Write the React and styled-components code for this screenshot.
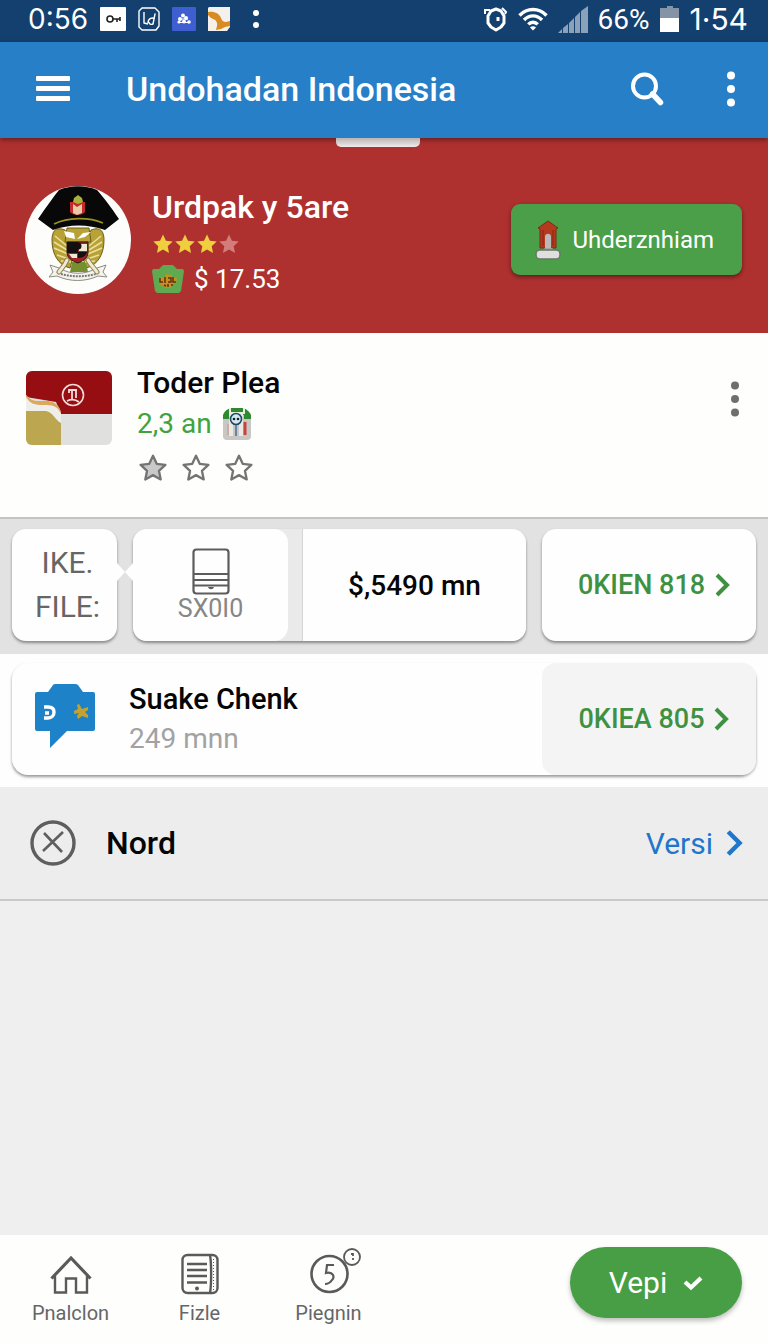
import React from 'react';
import styled, { createGlobalStyle } from 'styled-components';

const GlobalStyle = createGlobalStyle`
  * {
    box-sizing: border-box;
  }
  body {
    margin: 0;
    background: #efefef;
    font-family: Roboto, "Liberation Sans", sans-serif;
    color: #050505;
  }
  button {
    font: inherit;
    color: inherit;
    border: none;
    background: none;
    padding: 0;
    cursor: pointer;
  }
  a {
    color: inherit;
    text-decoration: none;
  }
  h1, h2, h3, p {
    margin: 0;
    font-weight: 400;
  }
  svg {
    display: block;
    flex: none;
  }
`

const STAR = 'M12 1.5l3.2 6.9 7.4.9-5.5 5.1 1.5 7.4L12 18.1l-6.6 3.7 1.5-7.4L1.4 9.3l7.4-.9z';

function Star({ size, fill, stroke }) {
  return (
    <svg width={size} height={size} viewBox="0 0 24 24" fill={fill} stroke={stroke} strokeWidth="2" strokeLinejoin="round">
      <path d={STAR} />
    </svg>
  )
}

function Dots({ color, size }) {
  return (
    <svg width={size} height="40" viewBox="0 0 10 40" fill={color}>
      <circle cx="5" cy="6.5" r="4" />
      <circle cx="5" cy="20" r="4" />
      <circle cx="5" cy="33.5" r="4" />
    </svg>
  )
}

function Chevron({ width, height }) {
  return (
    <svg width={width} height={height} viewBox="0 0 16 24" fill="none" stroke="currentColor" strokeWidth="4">
      <path d="M2 2l10 10L2 22" />
    </svg>
  )
}

function KeyIcon() {
  return (
    <svg width="26" height="24" viewBox="0 0 26 24">
      <rect width="26" height="24" rx="1" fill="#fff" />
      <circle cx="10" cy="12" r="3" fill="none" stroke="#222" strokeWidth="1.6" />
      <path d="M13 12h7M17 12v3M20 10v4" fill="none" stroke="#222" strokeWidth="1.6" />
    </svg>
  )
}

function NoteIcon() {
  return (
    <svg width="22" height="24" viewBox="0 0 22 24" fill="none" stroke="#fff" strokeWidth="1.4" strokeLinejoin="round">
      <path d="M4 1h13l4 4v14l-3 4H4l-3-3V4z" />
      <path d="M6 5v11l4 1M10 16c0-5 5-6 6-4l1-5-2 10c-2 1-4 0-4-2" />
    </svg>
  )
}

function PuzzleIcon() {
  return (
    <svg width="24" height="24" viewBox="0 0 24 24">
      <rect width="24" height="24" rx="1" fill="#3f5fd0" />
      <g fill="#fff">
        <circle cx="11" cy="8.5" r="2" />
        <circle cx="8" cy="12" r="2" />
        <circle cx="14" cy="11" r="2" />
        <circle cx="7" cy="15" r="1.6" />
        <circle cx="12" cy="14.5" r="2" />
        <circle cx="17" cy="15" r="1.8" />
      </g>
      <path d="M7 12h9M6 15.5h12" stroke="#fff" strokeWidth="1" />
    </svg>
  )
}

function BirdIcon() {
  return (
    <svg width="23" height="24" viewBox="0 0 23 24">
      <path d="M1 0h21v20l-3 4H0V1z" fill="#f4f1ec" />
      <path d="M0 5c6-1 11 1 13 6 1 3 3 4 5 4l4-1v5l-5 1-4 2-5 1c1-4 2-6 0-9-1-2-5-2-7-5l-1-1z" fill="#d98a20" />
    </svg>
  )
}

function AlarmIcon() {
  return (
    <svg width="24" height="26" viewBox="0 0 24 26" fill="none" stroke="#fff">
      <path d="M7 5l5-2 5 2 3 5v7l-3 4-5 3-5-3-3-4v-7z" strokeWidth="3" strokeLinejoin="round" />
      <path d="M1 8V4h5M18 2l4 4-1 2" strokeWidth="2" />
      <path d="M14 11v4" strokeWidth="3" />
    </svg>
  )
}

function WifiIcon() {
  return (
    <svg width="30" height="24" viewBox="0 0 30 24" fill="none" stroke="#fff" strokeWidth="3.4">
      <path d="M1.500 8.500c7.500-8 19.500-8 27 0M6 13c5-5.500 13-5.500 18 0M10.300 17.300c2.600-2.800 6.800-2.800 9.400 0" />
      <path d="M12 20.500c1.700-1.600 4.300-1.600 6 0L15 23.500z" fill="#fff" stroke="none" />
    </svg>
  )
}

function SignalIcon() {
  return (
    <svg width="30" height="27" viewBox="0 0 30 27" fill="#8ba1ba">
      <path d="M0 27l4-4v4zM5 27v-5l5-4v9zM11 27V17l5-5v15zM17 27V11l5-5v21zM23 27V5l7-5v27z" />
    </svg>
  )
}

function BatteryIcon() {
  return (
    <svg width="20" height="26" viewBox="0 0 20 26">
      <path d="M7 0h6v2h6v10H0V2h7z" fill="#8493a5" />
      <path d="M0 12h19v14H0z" fill="#fff" />
    </svg>
  )
}

function Emblem() {
  return (
    <svg width="106" height="108" viewBox="0 0 106 108">
      <ellipse cx="53" cy="54" rx="53" ry="54" fill="#fdfdfb" />
      <g fill="#b9a235" stroke="#6d5f1c" strokeWidth="1">
        <path d="M40 44C30 40 27 46 27 54c0 14 6 25 18 28l4-14z" />
        <path d="M66 44c10-4 13 2 13 10 0 14-6 25-18 28l-4-14z" />
        <path d="M42 42h22l2 14H40z" />
        <path d="M47 76h14l2 10H45z" fill="#77902f" stroke="none" />
      </g>
      <path
        d="M30 50l12 10M29 56l13 8M29 62l14 6M32 69l12 4M36 75l10 1M76 50L64 60M77 56l-13 8M77 62l-14 6M74 69l-12 4M70 75l-10 1"
        stroke="#ece0a0"
        strokeWidth="1.5"
      />
      <path d="M39 45l10 2 1 6-9-2zM66 46l-8 1-6 6 8-2z" fill="#fff" />
      <path d="M42 56h21v10c0 6-5 9-10 11-6-2-11-5-11-11z" fill="#a52229" stroke="#2c1a10" strokeWidth="1" />
      <path d="M42 56h11v11H42zM53 66h9c-1 4-4 6-9 6z" fill="#141010" />
      <path d="M54 58h8v7h-8zM44 68h8v4h-5z" fill="#efe9d6" />
      <circle cx="53" cy="60" r="3.5" fill="#141010" />
      <path
        d="M25 79l9 3c12 7 26 7 38 0l9-3-3 7 4 5-9-1c-13 6-28 6-41 0l-8 1 4-5z"
        fill="#f4f3ee"
        stroke="#8d8d85"
        strokeWidth="1"
      />
      <path d="M36 88c11 3 24 3 35 0" fill="none" stroke="#7a7a74" strokeWidth="2" strokeDasharray="2 1" />
      <path d="M42 74c-2 5-5 8-8 12M63 74c2 4 6 8 9 12" stroke="#8a8053" strokeWidth="5" strokeLinecap="round" />
      <path d="M42 74c-2 5-5 8-8 12M63 74c2 4 6 8 9 12" stroke="#f0ead2" strokeWidth="3" strokeLinecap="round" />
      <path d="M13 33C22 20 29 10 34 4c12-5 26-5 38 0 7 8 14 17 22 29l-14 11c-17-6-36-6-52 0z" fill="#070807" />
      <path d="M29 38c14-7 35-7 49-1" fill="none" stroke="#9a9226" strokeWidth="1.6" />
      <path d="M45 16h15v10c-3 4-12 4-15 0z" fill="#c4292b" />
      <path d="M48 18l4 3 5-3v9l-5 2-4-2z" fill="#e8c9a8" />
      <path d="M48 16l1-4 4-3 4 3 1 4-5 2z" fill="#a8b23a" />
    </svg>
  )
}

function BasketIcon() {
  return (
    <svg width="32" height="28" viewBox="0 0 32 28">
      <path d="M1 4h6l4-4h10l4 4h6l1 2-3 20-2 2H5l-2-2L0 6z" fill="#5faa50" />
      <path d="M7 13l6-1 1-3 4 1 2-1v3l5 1-1 5-3 1-2 4h-5l-3-2-4-2z" fill="#c98e1f" />
      <path d="M8 13v4h3M13 12v6M16 13h3v4h-3M21 12v5h3M12 20l2 1M16 19v3M19 20h2" stroke="#5e3210" strokeWidth="1.5" fill="none" />
    </svg>
  )
}

function MonumentIcon() {
  return (
    <svg width="26" height="40" viewBox="0 0 26 40">
      <path d="M13 1l10 7-2 1v19H5V9L3 8z" fill="#b5391f" stroke="#7d2a17" strokeWidth="1" />
      <path d="M8 10v16M18 10v16" stroke="#a02d18" strokeWidth="2" />
      <path d="M10 30V16c1-3 5-3 6 0v14z" fill="#b9bab8" />
      <path d="M7 31l3-3h7l3 3z" fill="#a2a5a3" />
      <rect x="1" y="30" width="24" height="9" rx="4" fill="#dfe0de" stroke="#68756a" strokeWidth="1.5" />
    </svg>
  )
}

function CardArt() {
  return (
    <svg width="86" height="74" viewBox="0 0 86 74">
      <clipPath id="card"><rect width="86" height="74" rx="6" /></clipPath>
      <g clipPath="url(#card)">
        <rect width="86" height="74" fill="#e0e0de" />
        <path d="M0 0h86v43H35L30 31 0 26z" fill="#960e12" />
        <path d="M0 24c5 6 9 6 16 6 10-1 17 3 19 12v12c-6-1-7-6-11-9H0z" fill="#efeeea" />
        <path d="M0 24c5 6 9 6 16 6 10-1 18 3 19 13-4-9-9-9-17-9-9 0-14-1-18-8z" fill="#d9a95c" />
        <path d="M0 40h20c7 1 9 9 15 12v22H0z" fill="#bda650" />
      </g>
      <circle cx="47" cy="24" r="10.5" fill="none" stroke="#f3dcdc" strokeWidth="1.6" />
      <path d="M43 22v-3h8M46 19v10M50 20v7M41 30c4-2 8-2 12 1" fill="none" stroke="#f3dcdc" strokeWidth="1.8" />
    </svg>
  )
}

function ShopIcon() {
  return (
    <svg width="30" height="34" viewBox="0 0 30 34">
      <rect x="1" y="7" width="28" height="26" rx="4" fill="#c9c7c6" />
      <path d="M1 12V8c2-5 6-7 9-7h10c4 0 8 4 9 7v4h-7V8H9v4z" fill="#2f8a2f" />
      <path d="M7 7h4v22H7zM17 7h4v22h-4z" fill="#ece8e4" />
      <path d="M8 1v5h14V1" fill="none" stroke="#e6efe0" strokeWidth="2" />
      <circle cx="14" cy="12" r="5.5" fill="#d7e7ee" stroke="#1d4b66" strokeWidth="1.6" />
      <circle cx="12" cy="12" r="1.3" fill="#10222e" />
      <circle cx="16" cy="12" r="1.3" fill="#10222e" />
      <path d="M14 18v11" stroke="#4b7596" strokeWidth="1.6" />
      <path d="M23 15v13" stroke="#c0453e" strokeWidth="3" />
      <path d="M6 17v11" stroke="#c9a79a" strokeWidth="1.6" />
    </svg>
  )
}

function PhoneIcon() {
  return (
    <svg width="38" height="47" viewBox="0 0 38 47" fill="none" stroke="#5c5c5c" strokeWidth="2.2">
      <rect x="1.5" y="1.5" width="35" height="44" rx="3" />
      <path d="M2 26h34M2 32h34M2 37.5h34" />
      <path d="M16 39h6c-1 3-5 3-6 0z" fill="#5c5c5c" stroke="none" />
    </svg>
  )
}

function ChatIcon() {
  return (
    <svg width="62" height="66" viewBox="0 0 62 66">
      <path d="M3 9h11l5-7q1-1 2-1h20q2 0 3 1l5 7h10q2 0 2 2v35q0 2-2 2H33L16 65V48H3q-2 0-2-2V11q0-2 2-2z" fill="#1e82c8" />
      <path d="M10 24h4c4 0 6 2 6 5s-2 6-6 6h-4M11 30h4" fill="none" stroke="#fff" strokeWidth="3.4" />
      <path d="M45 21l3 5 6-2v3l-3 2 3 3v3l-6-2-4 3-1-3 2-3-5 1v-3l4-2-1-4z" fill="#c3a22f" />
    </svg>
  )
}

function CancelIcon() {
  return (
    <svg width="46" height="46" viewBox="0 0 46 46" fill="none" stroke="#5e5e5e">
      <circle cx="23" cy="23" r="21" strokeWidth="3.4" />
      <path d="M14 13l18 19M33 12L13 31" strokeWidth="2.6" />
    </svg>
  )
}

function HomeIcon() {
  return (
    <svg width="42" height="40" viewBox="0 0 42 40" fill="none" stroke="#5a5a5a" strokeWidth="2.4">
      <path d="M1.5 23.500L21 3l19.500 20.500" strokeWidth="3.2" />
      <path d="M5 21v16.500h11V23.500h10v14h11V21" />
    </svg>
  )
}

function FileIcon() {
  return (
    <svg width="38" height="42" viewBox="0 0 38 42" fill="none" stroke="#5a5a5a" strokeWidth="2.4">
      <rect x="1.5" y="2" width="35" height="38" rx="5" />
      <path d="M29 2c1.5 8 1.5 30 0 38M6 11h20M6 17h20M6 23h20M6 29.500h20" />
      <circle cx="16" cy="35.5" r="2" fill="#5a5a5a" stroke="none" />
      <path d="M32.5 6v31" strokeWidth="1" strokeDasharray="1 2" />
    </svg>
  )
}

// wide box on the left keeps the big coin centred over its label
function CoinIcon() {
  return (
    <svg width="65" height="48" viewBox="-13 0 65 48" fill="none" stroke="#5a5a5a">
      <circle cx="20.5" cy="27" r="18" strokeWidth="2.6" />
      <circle cx="43" cy="10" r="8" strokeWidth="1.8" />
      <path d="M25 18h-7l-1 8c7-2 9 4 6 7-2 3-4 4-7 4" strokeWidth="2.2" />
      <path d="M42 7h2v6" strokeWidth="1.8" strokeDasharray="4 2" />
    </svg>
  )
}

const navItems = [
  { label: 'Pnalclon', icon: <HomeIcon /> },
  { label: 'Fizle', icon: <FileIcon /> },
  { label: 'Piegnin', icon: <CoinIcon /> },
];

function App() {
  return (
    <React.Fragment>
      <GlobalStyle />
      <Page>
        <StatusBar>
          <StatusGroup>
            <Clock>0:56</Clock>
            <KeyIcon />
            <NoteIcon />
            <PuzzleIcon />
            <BirdIcon />
            <MoreDots />
          </StatusGroup>
          <StatusGroup $tight>
            <AlarmIcon />
            <WifiIcon />
            <SignalIcon />
            <span>66%</span>
            <BatteryIcon />
            <Clock $large>1·54</Clock>
          </StatusGroup>
        </StatusBar>

        <AppBar>
          <IconButton aria-label="Menu">
            <svg width="34" height="26" viewBox="0 0 34 26" fill="#fff">
              <rect width="34" height="5" rx="1" />
              <rect y="10" width="34" height="5" rx="1" />
              <rect y="20" width="34" height="5" rx="1" />
            </svg>
          </IconButton>
          <AppTitle>Undohadan Indonesia</AppTitle>
          <IconButton aria-label="Search">
            <svg width="34" height="34" viewBox="0 0 34 34" fill="none" stroke="#fff">
              <circle cx="14.5" cy="14" r="11.5" strokeWidth="4" />
              <path d="M22.5 22l8 8.500" strokeWidth="5.5" strokeLinecap="round" />
            </svg>
          </IconButton>
          <IconButton aria-label="More options"><Dots color="#fff" size="10" /></IconButton>
        </AppBar>

        <Hero>
          <Emblem />
          <HeroText>
            <HeroName>Urdpak y 5are</HeroName>
            <Stars>
              <Star size={22} fill="#efcf3d" />
              <Star size={22} fill="#efcf3d" />
              <Star size={22} fill="#efcf3d" />
              <Star size={22} fill="#d27d7c" />
            </Stars>
            <Price><BasketIcon /> $ 17.53</Price>
          </HeroText>
          <HeroButton><MonumentIcon /> Uhderznhiam</HeroButton>
        </Hero>

        <Item>
          <CardArt />
          <ItemText>
            <ItemTitle>Toder Plea</ItemTitle>
            <Distance>2,3 an <ShopIcon /></Distance>
            <Stars $wide>
              <Star size={28} fill="#c9c9c9" stroke="#747474" />
              <Star size={28} fill="none" stroke="#747474" />
              <Star size={28} fill="none" stroke="#747474" />
            </Stars>
          </ItemText>
          <IconButton aria-label="Item options"><Dots color="#6f6f6f" size="10" /></IconButton>
        </Item>

        <Strip>
          <LabelCard>
            <span>IKE.</span>
            <span>FILE:</span>
          </LabelCard>
          <DeviceCard>
            <DevicePanel>
              <PhoneIcon />
              SX0I0
            </DevicePanel>
            <Amount>$,5490 mn</Amount>
          </DeviceCard>
          <ActionLink href="#818" $raised>0KIEN 818 <Chevron width={18} height={24} /></ActionLink>
        </Strip>

        <Band>
          <ChatCard>
            <ChatIcon />
            <ChatText>
              <ChatTitle>Suake Chenk</ChatTitle>
              <ChatSub>249 mnn</ChatSub>
            </ChatText>
            <ActionLink href="#805">0KIEA 805 <Chevron width={18} height={24} /></ActionLink>
          </ChatCard>
        </Band>

        <NordRow>
          <CancelIcon />
          <NordTitle>Nord</NordTitle>
          <VersiLink href="#versi">Versi <Chevron width={18} height={28} /></VersiLink>
        </NordRow>

        <BottomBar>
          <Nav>
            {navItems.map(item => (
              <NavLink key={item.label} href={'#' + item.label}>
                {item.icon}
                {item.label}
              </NavLink>
            ))}
          </Nav>
          <Pill>
            Vepi
            <svg width="20" height="16" viewBox="0 0 20 16" fill="none" stroke="#fff" strokeWidth="4.2">
              <path d="M2 7l6 5.500L18 3" />
            </svg>
          </Pill>
        </BottomBar>
      </Page>
    </React.Fragment>
  );
}

export default App;

// Layout
const Page = styled.div`
  display: flex;
  flex-direction: column;
  min-height: 100vh;
`

const StatusBar = styled.header`
  display: flex;
  justify-content: space-between;
  align-items: center;
  height: 42px;
  padding: 0 20px 4px 28px;
  background: #13406f;
  color: #fff;
  font-size: 28px;
`

const StatusGroup = styled.div`
  display: flex;
  align-items: center;
  gap: ${props => (props.$tight ? '10px' : '12px')};
`

const Clock = styled.time`
  font-family: Inter, Roboto, sans-serif;
  font-size: ${props => (props.$large ? '30px' : '28px')};
`

const MoreDots = styled.span`
  display: flex;
  flex-direction: column;
  gap: 6px;
  margin-left: 10px;

  &::before,
  &::after {
    content: '';
    width: 6px;
    height: 6px;
    border-radius: 50%;
    background: #fff;
  }
`

const AppBar = styled.div`
  position: relative;
  display: flex;
  align-items: center;
  height: 96px;
  padding: 0 32px 2px 36px;
  gap: 62px;
  background: #277fc7;
  box-shadow: 0 2px 5px rgba(0, 0, 0, 0.4);

  &::after {
    content: '';
    position: absolute;
    top: 100%;
    left: 50%;
    width: 84px;
    height: 9px;
    margin-left: -48px;
    border-radius: 0 0 5px 5px;
    background: linear-gradient(#b9b3b3, #f1ecec);
  }
`

const IconButton = styled.button`
  display: flex;
  align-items: center;
`

const AppTitle = styled.h1`
  flex: 1;
  margin-left: -6px;
  color: #fff;
  font-size: 34px;
  font-weight: 500;
  line-height: 40px;
`

const Hero = styled.section`
  display: flex;
  align-items: center;
  height: 195px;
  padding: 8px 26px 0 25px;
  background: #ae3130;
  color: #fff;
`

const HeroText = styled.div`
  flex: 1;
  margin-left: 21px;
`

const HeroName = styled.h2`
  font-size: 32px;
  font-weight: 500;
  line-height: 44px;
`

const Stars = styled.div`
  display: flex;
  gap: ${props => (props.$wide ? '15px' : '0')};
  margin: ${props => (props.$wide ? '8px 0 0 2px' : '4px 0 0')};
`

const Price = styled.p`
  display: flex;
  align-items: center;
  gap: 10px;
  margin-top: 8px;
  font-size: 26px;
  line-height: 32px;
`

const HeroButton = styled.button`
  display: flex;
  align-items: center;
  gap: 12px;
  height: 71px;
  padding: 0 28px 0 24px;
  border-radius: 9px;
  background: #4a9f48;
  box-shadow: 0 2px 4px rgba(0, 0, 0, 0.45);
  color: #fff;
  font-size: 24px;
`

const Item = styled.section`
  display: flex;
  height: 184px;
  padding: 38px 28px 0 26px;
  background: #fefefd;

  ${IconButton} {
    align-self: flex-start;
    margin-top: 8px;
  }
`

const ItemText = styled.div`
  flex: 1;
  margin: -7px 0 0 25px;
`

const ItemTitle = styled.h3`
  font-size: 30px;
  font-weight: 500;
  line-height: 38px;
`

const Distance = styled.p`
  display: flex;
  align-items: center;
  gap: 10px;
  color: #3fa33f;
  font-size: 28px;
  line-height: 44px;
`

const Strip = styled.section`
  display: flex;
  gap: 16px;
  height: 137px;
  padding: 10px 12px 13px;
  border-top: 2px solid #c4c4c4;
  background: #e3e2e2;
`

const LabelCard = styled.div`
  position: relative;
  display: flex;
  flex-direction: column;
  justify-content: center;
  align-items: center;
  width: 105px;
  padding-left: 6px;
  border-radius: 14px;
  background: #fefefe;
  box-shadow: 0 2px 3px rgba(0, 0, 0, 0.4);
  color: #666;
  font-size: 30px;
  line-height: 44px;

  &::after {
    content: '';
    position: absolute;
    top: 34px;
    left: 100%;
    width: 16px;
    height: 18px;
    background: #fefefe;
    clip-path: polygon(0 0, 50% 50%, 100% 0, 100% 100%, 50% 50%, 0 100%);
  }
`

const DeviceCard = styled.div`
  display: flex;
  flex: 1;
  border-radius: 14px;
  background: #ebeaea;
  box-shadow: 0 2px 3px rgba(0, 0, 0, 0.4);
`

const DevicePanel = styled.div`
  display: flex;
  flex-direction: column;
  justify-content: center;
  align-items: center;
  width: 155px;
  border-radius: 14px;
  background: #fefefe;
  color: #868686;
  font-size: 25px;
  line-height: 28px;
`

const Amount = styled.div`
  display: flex;
  flex: 1;
  justify-content: center;
  align-items: center;
  margin-left: 14px;
  border-left: 1px solid #d6d6d6;
  border-radius: 0 14px 14px 0;
  background: #fefefe;
  font-size: 28px;
  font-weight: 500;
`

const ActionLink = styled.a`
  display: flex;
  justify-content: center;
  align-items: center;
  gap: 9px;
  width: 214px;
  padding-left: 12px;
  border-radius: 14px;
  background: ${props => (props.$raised ? '#fefefe' : '#f4f4f4')};
  box-shadow: ${props => (props.$raised ? '0 2px 3px rgba(0, 0, 0, 0.4)' : 'none')};
  color: #3f9142;
  font-size: 27px;
  font-weight: 500;
`

const Band = styled.section`
  height: 133px;
  padding: 9px 12px 12px;
  background: #fefefe;
`

const ChatCard = styled.div`
  display: flex;
  height: 112px;
  padding-left: 22px;
  border-radius: 16px;
  background: #fefefe;
  box-shadow: 0 2px 3px rgba(0, 0, 0, 0.4);

  > svg {
    margin-top: 20px;
  }
`

const ChatText = styled.div`
  flex: 1;
  margin: 17px 0 0 33px;
`

const ChatTitle = styled.h3`
  font-size: 29px;
  font-weight: 500;
  line-height: 38px;
`

const ChatSub = styled.p`
  color: #a2a2a2;
  font-size: 28px;
  line-height: 42px;
`

const NordRow = styled.section`
  display: flex;
  align-items: center;
  height: 114px;
  padding: 0 24px 0 30px;
  border-bottom: 2px solid #c9c9c9;
  background: #ededed;
`

const NordTitle = styled.h3`
  flex: 1;
  margin-left: 30px;
  font-size: 32px;
  font-weight: 500;
`

const VersiLink = styled.a`
  display: flex;
  align-items: center;
  gap: 13px;
  color: #1f76cb;
  font-size: 30px;
`

const BottomBar = styled.footer`
  display: flex;
  justify-content: space-between;
  align-items: flex-start;
  height: 109px;
  margin-top: auto;
  padding: 12px 26px 0 6px;
  background: #fefefd;
`

const Nav = styled.nav`
  display: flex;
`

const NavLink = styled.a`
  display: flex;
  flex-direction: column;
  justify-content: flex-end;
  align-items: center;
  gap: 4px;
  width: 129px;
  height: 80px;
  color: #666;
  font-size: 20px;
  line-height: 28px;
`

const Pill = styled.button`
  display: flex;
  justify-content: center;
  align-items: center;
  gap: 16px;
  width: 172px;
  height: 71px;
  border-radius: 36px;
  background: #479e44;
  box-shadow: 0 3px 5px rgba(0, 0, 0, 0.25);
  color: #fff;
  font-size: 30px;
`
